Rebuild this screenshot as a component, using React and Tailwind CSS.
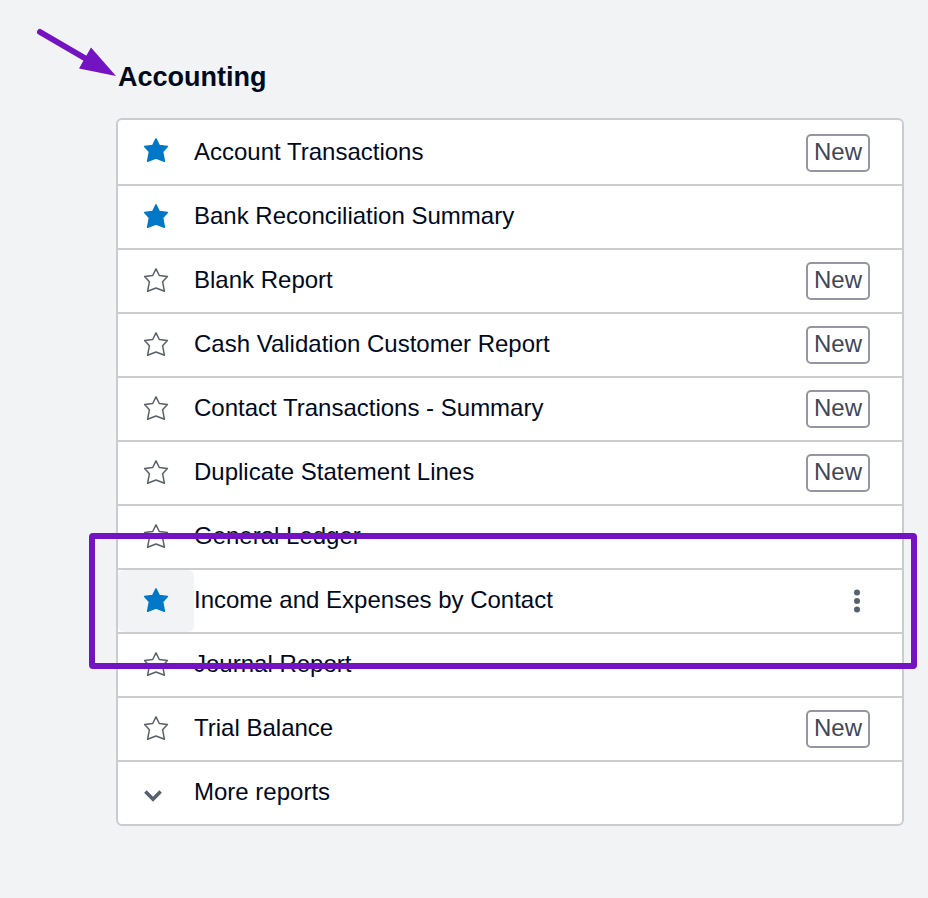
import { useState } from "react";

const initialReports = [
  { name: "Account Transactions", starred: true, isNew: true },
  { name: "Bank Reconciliation Summary", starred: true },
  { name: "Blank Report", isNew: true },
  { name: "Cash Validation Customer Report", isNew: true },
  { name: "Contact Transactions - Summary", isNew: true },
  { name: "Duplicate Statement Lines", isNew: true },
  { name: "General Ledger" },
  { name: "Income and Expenses by Contact", starred: true, active: true },
  { name: "Journal Report" },
  { name: "Trial Balance", isNew: true },
];

export default function App() {
  const [reports, setReports] = useState(initialReports);

  const toggleStar = name => {
    setReports(prev =>
      prev.map(report =>
        report.name === name ? { ...report, starred: !report.starred } : report
      )
    );
  };

  return (
    <main className="min-h-screen bg-[#f2f3f5] pt-[59px] pr-6 pb-16 pl-[116px] font-['Liberation_Sans',Arial,sans-serif] text-[#000a1e]">
      <section aria-labelledby="accounting">
        <div className="relative">
          <Arrow />
          <h2 id="accounting" className="pl-[2px] text-[27px] leading-9 font-bold">
            Accounting
          </h2>
        </div>
        <ul className="mt-[23px] rounded-md border-2 border-[#cbccd1] bg-white text-2xl">
          {reports.map(report => (
            <ReportRow
              key={report.name}
              report={report}
              onToggle={() => toggleStar(report.name)}
            />
          ))}
          <li>
            <button className="flex h-[62px] w-full items-center pb-[2px] text-left">
              <span className="w-[76px] pt-2 pl-[26px]">
                <Chevron />
              </span>
              More reports
            </button>
          </li>
        </ul>
      </section>
    </main>
  );
}

function ReportRow({ report, onToggle }) {
  return (
    <li className="relative flex h-16 items-end border-b-2 border-[#cbccd1] first:h-[66px]">
      <button
        onClick={onToggle}
        aria-label={"Favourite " + report.name}
        aria-pressed={Boolean(report.starred)}
        className={
          report.active
            ? "flex h-[62px] w-[76px] items-center justify-center self-start rounded-md bg-[#f2f3f5] pb-[2px]"
            : "flex h-[62px] w-[76px] items-center justify-center self-start pb-[2px]"
        }
      >
        <Star filled={report.starred} />
      </button>
      <a href="#" className="flex h-[62px] flex-1 items-center pb-[2px]">
        {report.name}
      </a>
      <div className="flex h-[62px] items-center pr-8">
        {report.isNew && (
          <span className="flex h-[38px] w-16 justify-center rounded-[5px] border-2 border-[#9497a1] leading-8 text-[#404756]">
            New
          </span>
        )}
        {report.active && (
          <button aria-label="Options" className="flex h-10 w-[26px] items-center justify-center">
            <Dots />
          </button>
        )}
      </div>
      {report.active && (
        <div className="pointer-events-none absolute -top-[37px] -right-[15px] -bottom-[37px] -left-[29px] z-10 rounded border-6 border-[#7413c2]" />
      )}
    </li>
  );
}

function Star({ filled }) {
  return (
    <svg width="26" height="26" viewBox="-1 -1 26 26" aria-hidden="true">
      <path
        d="M12 0.8 15.3 7.5 23.4 8.6 18.6 13.8 20.4 23.2 12 20 3.6 23.2 5.4 13.8 0.6 8.6 8.7 7.5Z"
        fill={filled ? "#0078c8" : "none"}
        stroke={filled ? "#0078c8" : "#59606d"}
        strokeWidth="1.5"
        strokeLinejoin="round"
      />
    </svg>
  );
}

function Chevron() {
  return (
    <svg width="18" height="12" viewBox="0 0 18 12" aria-hidden="true">
      <path d="M1.4 1.6 9 9.2 16.6 1.6" fill="none" stroke="#59606d" strokeWidth="3.6" />
    </svg>
  );
}

function Dots() {
  return (
    <svg width="8" height="24" viewBox="0 0 8 24" fill="#59606d" aria-hidden="true">
      <circle cx="4" cy="3.5" r="3" />
      <circle cx="4" cy="12" r="3" />
      <circle cx="4" cy="20.5" r="3" />
    </svg>
  );
}

// points at the section title
function Arrow() {
  return (
    <svg
      width="80"
      height="50"
      viewBox="36 28 80 50"
      className="absolute -top-[31px] -left-20"
      aria-hidden="true"
    >
      <path d="M40 32 88 60" stroke="#7413c2" strokeWidth="6" strokeLinecap="round" />
      <path d="M116 76 91 47.5 79 68.5Z" fill="#7413c2" />
    </svg>
  );
}
